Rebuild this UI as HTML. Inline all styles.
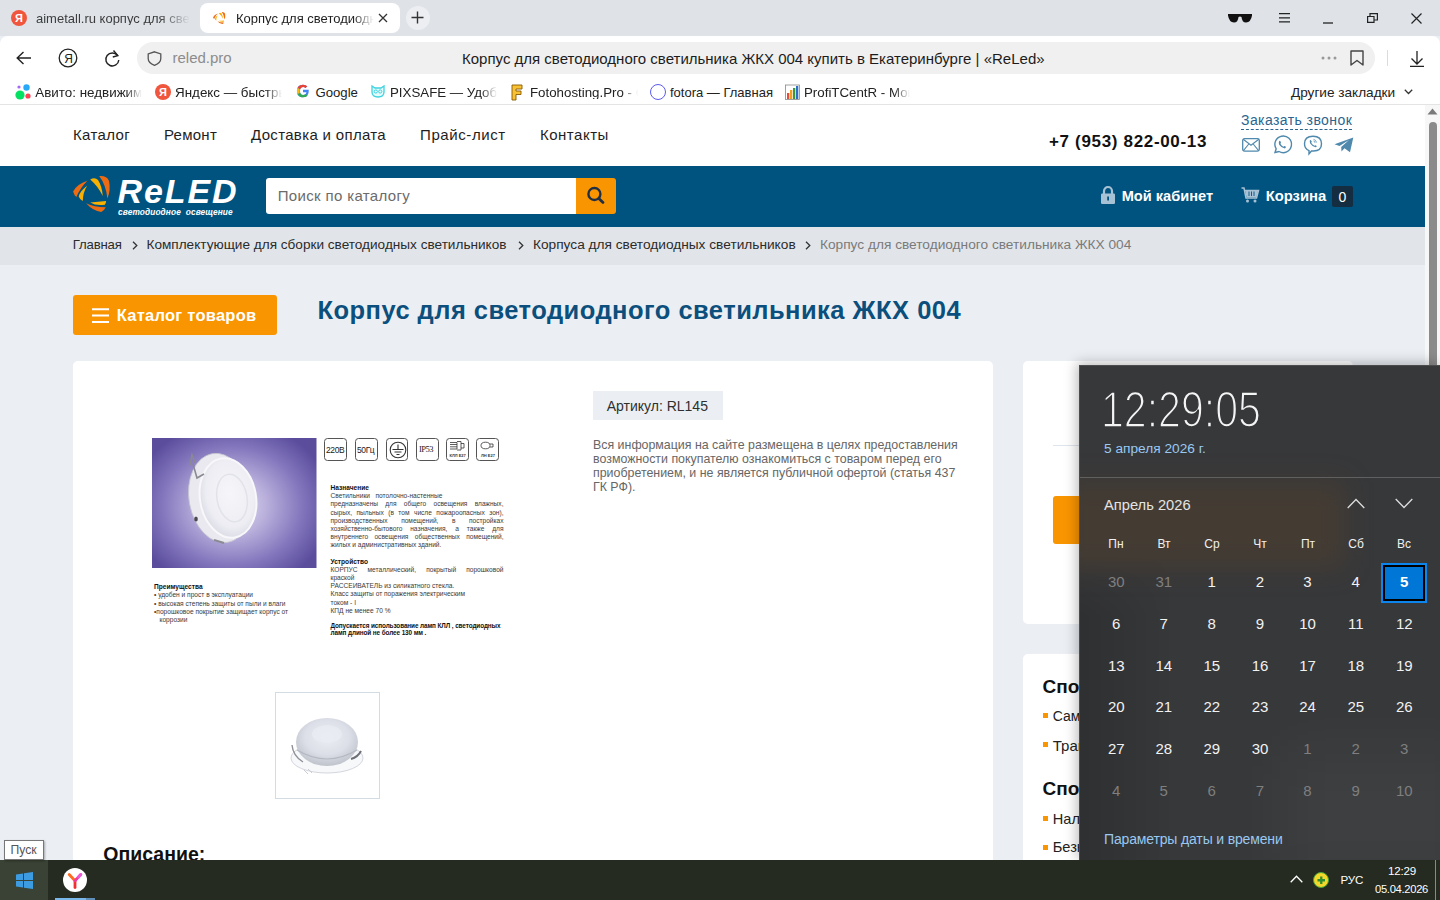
<!DOCTYPE html>
<html><head><meta charset="utf-8">
<style>
*{margin:0;padding:0;box-sizing:border-box}
html,body{width:1440px;height:900px;overflow:hidden;font-family:"Liberation Sans",sans-serif;background:#ebeff4;position:relative}
.a{position:absolute}
.t{position:absolute;white-space:nowrap;line-height:1}
svg{position:absolute;overflow:visible}
</style></head><body>

<!-- ============ BROWSER CHROME ============ -->
<div class="a" style="left:0;top:0;width:1440px;height:36px;background:#dfe3e8"></div>
<!-- tab 1 -->
<div class="a" style="left:11px;top:10px;width:16px;height:16px;border-radius:50%;background:#f0563d"></div>
<div class="t" style="left:15px;top:12.5px;font-size:11px;font-weight:bold;color:#fff">Я</div>
<div class="t" style="left:36px;top:11.8px;font-size:13px;color:#3c3c3c;width:154px;overflow:hidden;-webkit-mask-image:linear-gradient(90deg,#000 80%,transparent)">aimetall.ru корпус для свет</div>
<!-- tab 2 active -->
<div class="a" style="left:200px;top:3px;width:200px;height:30px;background:#fff;border-radius:8px"></div>
<svg style="left:212.7px;top:11.8px" width="12.4" height="12.1" viewBox="5 4 37 36">
  <path d="M19.4 8.7 Q9 12 5.1 19.4 Q6 23 8.4 25 Q12 16 19.4 8.7Z" fill="#ee6b12"/>
  <path d="M19.2 13.8 Q12 19 10.7 24.5 Q12 28 14.8 29.1 Q15 20 19.2 13.8Z" fill="#f9b000"/>
  <path d="M22.2 7.4 Q27 5 30 8 Q34 14 34.8 24 Q30 14 22.2 7.4Z" fill="#f9b000"/>
  <path d="M31.2 4.1 Q39 3.5 41 9 Q43 18 39.4 26.6 Q38 13 31.2 4.1Z" fill="#ee6b12"/>
  <path d="M22.2 30.4 Q30 30 38.1 29.1 Q38 32 36.8 32.7 Q28 34 22.2 30.4Z" fill="#f9b000"/>
  <path d="M18.1 31.2 Q26 35 37.8 35.3 Q36 39 33.2 39.9 Q25 39 18.1 31.2Z" fill="#ee6b12"/>
</svg>
<div class="t" style="left:236px;top:11.8px;font-size:13px;color:#1f1f1f;width:138px;overflow:hidden;-webkit-mask-image:linear-gradient(90deg,#000 85%,transparent)">Корпус для светодиодного</div>
<svg style="left:378px;top:13px" width="10" height="10" viewBox="0 0 10 10"><path d="M1 1L9 9M9 1L1 9" stroke="#333" stroke-width="1.3"/></svg>
<div class="a" style="left:405.5px;top:5.5px;width:24px;height:24px;border-radius:50%;background:#eceef2"></div>
<svg style="left:411px;top:11px" width="13" height="13" viewBox="0 0 13 13"><path d="M6.5 0.5V12.5M0.5 6.5H12.5" stroke="#333" stroke-width="1.4"/></svg>
<!-- window controls -->
<svg style="left:1228px;top:13px" width="24" height="10" viewBox="0 0 24 10"><path d="M0 1 H24 V2.5 Q23 9 18 9.5 Q14 9.5 13.5 4 Q12 3 10.5 4 Q10 9.5 6 9.5 Q1 9 0 2.5Z" fill="#111"/></svg>
<svg style="left:1279px;top:13px" width="11" height="10" viewBox="0 0 11 10"><path d="M0 0.7H11M0 4.8H11M0 8.9H11" stroke="#222" stroke-width="1.2"/></svg>
<svg style="left:1323px;top:22px" width="10" height="2" viewBox="0 0 10 2"><path d="M0 1H10" stroke="#222" stroke-width="1.3"/></svg>
<svg style="left:1367px;top:13px" width="11" height="10" viewBox="0 0 11 10"><path d="M0.6 3.5H7V9.4H0.6Z M3 3.5V0.6H10.4V7H7" stroke="#222" stroke-width="1.2" fill="none"/></svg>
<svg style="left:1411px;top:13px" width="11" height="11" viewBox="0 0 11 11"><path d="M0.5 0.5L10.5 10.5M10.5 0.5L0.5 10.5" stroke="#222" stroke-width="1.2"/></svg>

<!-- address row -->
<div class="a" style="left:0;top:36px;width:1440px;height:69px;background:#fff;border-radius:8px 8px 0 0;border-bottom:1px solid #e4e4e4"></div>
<svg style="left:16px;top:51px" width="16" height="14" viewBox="0 0 16 14"><path d="M15 7H1.5M7.5 1L1.2 7L7.5 13" stroke="#222" stroke-width="1.4" fill="none"/></svg>
<svg style="left:58px;top:48px" width="20" height="20" viewBox="0 0 20 20"><circle cx="10" cy="10" r="8.8" stroke="#222" stroke-width="1.3" fill="none"/><text x="6.2" y="15" font-family="Liberation Sans" font-size="12" fill="#222">Я</text></svg>
<svg style="left:104px;top:49px" width="17" height="18" viewBox="0 0 17 18"><path d="M13.5 6.5A6.5 6.5 0 1 0 14.8 11" stroke="#222" stroke-width="1.4" fill="none"/><path d="M9.5 1.5L13.8 6.6L8.8 8" stroke="#222" stroke-width="1.4" fill="none"/></svg>
<div class="a" style="left:136.5px;top:42px;width:1238px;height:32px;background:#f0f0f0;border-radius:16px"></div>
<svg style="left:147px;top:51px" width="15" height="15" viewBox="0 0 15 15"><path d="M7.5 0.8L13.8 3V7.5Q13.8 12 7.5 14.3Q1.2 12 1.2 7.5V3Z" stroke="#555" stroke-width="1.3" fill="none"/></svg>
<div class="t" style="left:172.5px;top:50px;font-size:15px;color:#8c8c8c">reled.pro</div>
<div class="t" style="left:462px;top:50.6px;font-size:15px;color:#1c1c1c">Корпус для светодиодного светильника ЖКХ 004 купить в Екатеринбурге | «ReLed»</div>
<svg style="left:1321px;top:56px" width="16" height="4" viewBox="0 0 16 4"><circle cx="2" cy="2" r="1.5" fill="#999"/><circle cx="8" cy="2" r="1.5" fill="#999"/><circle cx="14" cy="2" r="1.5" fill="#999"/></svg>
<svg style="left:1350px;top:50px" width="14" height="16" viewBox="0 0 14 16"><path d="M1 1H13V15L7 10.5L1 15Z" stroke="#444" stroke-width="1.4" fill="none" stroke-linejoin="round"/></svg>
<div class="a" style="left:1387px;top:50px;width:1px;height:16px;background:#dcdcdc"></div>
<svg style="left:1410px;top:51px" width="14" height="16" viewBox="0 0 14 16"><path d="M7 0V13M1.5 7.5L7 13L12.5 7.5M0 15.3H14" stroke="#222" stroke-width="1.3" fill="none"/></svg>

<!-- bookmarks -->
<svg style="left:15px;top:84px" width="16" height="16" viewBox="0 0 16 16"><circle cx="4" cy="3" r="1.6" fill="#a169f7"/><circle cx="11.5" cy="3.5" r="3.2" fill="#2aa8f8"/><circle cx="5" cy="11" r="4.6" fill="#04e061"/><circle cx="13" cy="12" r="2.6" fill="#ff4053"/></svg>
<div class="t" style="left:35.3px;top:85.7px;font-size:13.4px;color:#222;width:107px;overflow:hidden;-webkit-mask-image:linear-gradient(90deg,#000 85%,transparent)">Авито: недвижимость</div>
<div class="a" style="left:155px;top:84px;width:16px;height:16px;border-radius:50%;background:#f0563d"></div>
<div class="t" style="left:159px;top:86.5px;font-size:11px;font-weight:bold;color:#fff">Я</div>
<div class="t" style="left:175px;top:85.7px;font-size:13.4px;color:#222;width:107px;overflow:hidden;-webkit-mask-image:linear-gradient(90deg,#000 85%,transparent)">Яндекс — быстрый</div>
<svg style="left:296px;top:84px" width="14" height="14" viewBox="0 0 14 14"><path d="M12.8 5.8H7V8.3H10.4Q9.8 11 7 11Q4 11 4 7Q4 3 7 3Q8.5 3 9.5 4L11.3 2.2Q9.6 0.7 7 0.7Q1 0.7 0.9 7Q1 13.3 7 13.3Q13 13.3 12.8 5.8Z" fill="#4285f4"/><path d="M1.6 3.8L3.9 5.5Q4.8 3 7 3Q8.5 3 9.5 4L11.3 2.2Q9.6 0.7 7 0.7Q3.2 0.7 1.6 3.8Z" fill="#ea4335"/><path d="M1.6 10.2L3.9 8.5Q4.8 11 7 11Q8.7 11 9.6 10.1L11.7 11.8Q10 13.3 7 13.3Q3.2 13.3 1.6 10.2Z" fill="#34a853"/><path d="M1.6 3.8Q0.9 5.3 0.9 7Q0.9 8.7 1.6 10.2L3.9 8.5Q3.6 7.8 3.6 7Q3.6 6.2 3.9 5.5Z" fill="#fbbc05"/></svg>
<div class="t" style="left:315.4px;top:85.7px;font-size:13.2px;color:#222">Google</div>
<svg style="left:371px;top:85px" width="14" height="13" viewBox="0 0 14 13"><path d="M1 1L4 3H10L13 1V7Q13 12 7 12Q1 12 1 7Z" stroke="#3dd3e0" stroke-width="1.3" fill="#e6fbfc"/><circle cx="4.8" cy="6.5" r="1.6" stroke="#3dd3e0" fill="none"/><circle cx="9.2" cy="6.5" r="1.6" stroke="#3dd3e0" fill="none"/></svg>
<div class="t" style="left:390px;top:85.7px;font-size:13.3px;color:#222;width:107px;overflow:hidden;-webkit-mask-image:linear-gradient(90deg,#000 85%,transparent)">PIXSAFE — Удобный</div>
<svg style="left:511px;top:84px" width="12" height="17" viewBox="0 0 12 17"><path d="M1 1H11V5H5V7H10V10.5H5V16H1Z" fill="#f7c233" stroke="#8a5a00" stroke-width="0.9"/></svg>
<div class="t" style="left:530px;top:85.7px;font-size:13.3px;color:#222;width:108px;overflow:hidden;-webkit-mask-image:linear-gradient(90deg,#000 85%,transparent)">Fotohosting.Pro - Gallery</div>
<div class="a" style="left:650px;top:84px;width:16px;height:16px;border-radius:50%;border:1.8px solid #5c5cf0"></div>
<div class="t" style="left:670px;top:85.7px;font-size:13px;color:#222">fotora — Главная</div>
<svg style="left:785px;top:84px" width="15" height="16" viewBox="0 0 15 16"><rect x="0.5" y="1" width="14" height="14.5" fill="none" stroke="#888" stroke-width="0.8"/><rect x="2" y="9" width="2.3" height="6" fill="#e84b3c"/><rect x="5" y="6" width="2.3" height="9" fill="#f0a020"/><rect x="8" y="4" width="2.3" height="11" fill="#3a9a3a"/><rect x="11" y="2" width="2.3" height="13" fill="#2e6ec8"/></svg>
<div class="t" style="left:804px;top:85.7px;font-size:13.3px;color:#222;width:106px;overflow:hidden;-webkit-mask-image:linear-gradient(90deg,#000 85%,transparent)">ProfiTCentR - Мой сайт</div>
<div class="t" style="left:1291px;top:85.7px;font-size:13.6px;color:#222">Другие закладки</div>
<svg style="left:1404px;top:89px" width="9" height="6" viewBox="0 0 9 6"><path d="M0.8 0.8L4.5 4.5L8.2 0.8" stroke="#333" stroke-width="1.3" fill="none"/></svg>

<!-- ============ SITE ============ -->
<div class="a" style="left:0;top:105px;width:1425px;height:61px;background:#fff"></div>
<div class="t" style="left:73px;top:127.3px;font-size:15px;letter-spacing:0.35px;color:#1e1e1e">Каталог</div>
<div class="t" style="left:164px;top:127.3px;font-size:15px;letter-spacing:0.25px;color:#1e1e1e">Ремонт</div>
<div class="t" style="left:251px;top:127.3px;font-size:15px;letter-spacing:0.33px;color:#1e1e1e">Доставка и оплата</div>
<div class="t" style="left:420px;top:127.3px;font-size:15px;letter-spacing:0.6px;color:#1e1e1e">Прайс-лист</div>
<div class="t" style="left:540px;top:127.3px;font-size:15px;letter-spacing:0.5px;color:#1e1e1e">Контакты</div>
<div class="t" style="left:1049px;top:133px;font-size:17px;font-weight:bold;letter-spacing:0.67px;color:#111">+7 (953) 822-00-13</div>
<div class="t" style="left:1241px;top:113.1px;font-size:14px;letter-spacing:0.42px;color:#2a6590">Заказать звонок</div>
<div class="a" style="left:1241px;top:128.5px;width:111px;height:0;border-top:1px dashed #2a6590"></div>
<!-- contact icons -->
<svg style="left:1242px;top:138px" width="18" height="14" viewBox="0 0 18 14"><rect x="0.7" y="0.7" width="16.6" height="12.4" rx="1.8" fill="none" stroke="#4f89ad" stroke-width="1.3"/><path d="M1.2 1.2L9 7.3L16.8 1.2M1.2 12.8L6.8 6M16.8 12.8L11.2 6" stroke="#4f89ad" stroke-width="1.1" fill="none"/></svg>
<svg style="left:1272px;top:135px" width="20" height="20" viewBox="0 0 20 20"><path d="M3 17.5L4.2 13.8A8.3 8.3 0 1 1 7 16.5Z" stroke="#4f89ad" stroke-width="1.4" fill="none"/><path d="M7 6.5Q7.5 5.5 8.3 6L9 7.8Q8.6 8.6 8.4 8.8Q9.5 11 11.4 11.8L12.3 11L14 11.8Q14 13 12.7 13.4Q9.5 13.2 7.2 9.8Q6.5 8 7 6.5Z" fill="#4f89ad"/></svg>
<svg style="left:1303px;top:135px" width="20" height="20" viewBox="0 0 20 20"><path d="M10 1.2C15 1.2 18.5 3.5 18.5 8.8C18.5 14 15 16 10.5 16H8.5L6 18.8V15.6C3 14.5 1.5 12.5 1.5 8.8C1.5 3.5 5 1.2 10 1.2Z" stroke="#4f89ad" stroke-width="1.4" fill="none"/><path d="M6.8 5.5Q7.3 4.8 8 5.2L8.8 6.8Q8.5 7.5 8.2 7.8Q9.3 10 11.5 10.8L12.2 10.2L13.8 11Q13.6 12.2 12.5 12.3Q9.5 12 7.2 8.6Q6.6 7 6.8 5.5Z" fill="#4f89ad"/><path d="M10.5 4.3Q13 4.8 13.5 7.5M10.5 6Q12 6.3 12 7.8" stroke="#4f89ad" stroke-width="0.8" fill="none"/></svg>
<svg style="left:1334px;top:137px" width="20" height="16" viewBox="0 0 20 16"><path d="M0.5 7.2L19.3 0.5L16 15.2L10.5 11.3L7.5 14.5L7.2 10L15 3L5.5 9Z" fill="#4f89ad"/></svg>

<!-- blue band -->
<div class="a" style="left:0;top:166px;width:1425px;height:61px;background:#00537f"></div>
<!-- logo -->
<svg style="left:68px;top:172px" width="48" height="46" viewBox="0 0 48 46">
  <path d="M19.4 8.7 Q9 12 5.1 19.4 Q6 23 8.4 25 Q12 16 19.4 8.7Z" fill="#ee6b12"/>
  <path d="M19.2 13.8 Q12 19 10.7 24.5 Q12 28 14.8 29.1 Q15 20 19.2 13.8Z" fill="#f9b000"/>
  <path d="M22.2 7.4 Q27 5 30 8 Q34 14 34.8 24 Q30 14 22.2 7.4Z" fill="#f9b000"/>
  <path d="M31.2 4.1 Q39 3.5 41 9 Q43 18 39.4 26.6 Q38 13 31.2 4.1Z" fill="#ee6b12"/>
  <path d="M22.2 30.4 Q30 30 38.1 29.1 Q38 32 36.8 32.7 Q28 34 22.2 30.4Z" fill="#f9b000"/>
  <path d="M18.1 31.2 Q26 35 37.8 35.3 Q36 39 33.2 39.9 Q25 39 18.1 31.2Z" fill="#ee6b12"/>
</svg>
<div class="t" style="left:117.5px;top:174px;font-size:34px;font-weight:bold;font-style:italic;letter-spacing:1.9px;color:#fff">ReLED</div>
<div class="t" style="left:118px;top:208px;font-size:8.3px;font-weight:bold;font-style:italic;letter-spacing:0.12px;color:#fff">светодиодное&nbsp; освещение</div>
<!-- search -->
<div class="a" style="left:266px;top:178px;width:312px;height:35.5px;background:#fff;border-radius:3px 0 0 3px"></div>
<div class="t" style="left:277.7px;top:188.3px;font-size:15px;letter-spacing:0.35px;color:#6b6b6b">Поиск по каталогу</div>
<div class="a" style="left:576.4px;top:178px;width:39.6px;height:35.5px;background:#f99500;border-radius:0 3px 3px 0"></div>
<svg style="left:587px;top:187px" width="18" height="18" viewBox="0 0 18 18"><circle cx="7.4" cy="7" r="6" stroke="#1f2f45" stroke-width="2.4" fill="none"/><path d="M11.8 11.4L16 15.4" stroke="#1f2f45" stroke-width="2.8" stroke-linecap="round"/></svg>
<!-- cabinet / cart -->
<svg style="left:1101px;top:186px" width="14" height="18" viewBox="0 0 14 18"><path d="M3 8V5A4 4 0 0 1 11 5V8" stroke="#a8c2d5" stroke-width="2.2" fill="none"/><rect x="0" y="7.5" width="14" height="10.5" rx="1.2" fill="#a8c2d5"/><rect x="6.2" y="10.5" width="1.8" height="4" fill="#00537f"/></svg>
<div class="t" style="left:1121.7px;top:188.8px;font-size:14.6px;font-weight:bold;color:#fff">Мой кабинет</div>
<svg style="left:1241px;top:187px" width="18" height="16" viewBox="0 0 18 16"><path d="M0.5 1H3L5 11H15.5L17.5 3.5H4" stroke="#a8c2d5" stroke-width="1.5" fill="none"/><path d="M4.2 3.5H17.2L15.3 10.2H5.5Z" fill="#a8c2d5"/><path d="M8 4.5V9M10.5 4.5V9M13 4.5V9" stroke="#00537f" stroke-width="0.9"/><circle cx="6.5" cy="14" r="1.5" fill="#a8c2d5"/><circle cx="14" cy="14" r="1.5" fill="#a8c2d5"/></svg>
<div class="t" style="left:1265.7px;top:188.6px;font-size:14.8px;font-weight:bold;color:#fff">Корзина</div>
<div class="a" style="left:1332px;top:186px;width:21px;height:21px;background:#142d40;border-radius:2px"></div>
<div class="t" style="left:1338.5px;top:189.5px;font-size:14px;color:#fff">0</div>

<!-- breadcrumbs -->
<div class="a" style="left:0;top:227px;width:1425px;height:38px;background:#e1e5ea"></div>
<div class="t" style="left:72.8px;top:237.5px;font-size:13.2px;color:#2b2b2b;letter-spacing:-0.2px">Главная</div>
<svg style="left:131.5px;top:241px" width="6" height="9" viewBox="0 0 6 9"><path d="M1 0.8L4.8 4.5L1 8.2" stroke="#333" stroke-width="1.3" fill="none"/></svg>
<div class="t" style="left:146.5px;top:237.5px;font-size:13.6px;color:#2b2b2b">Комплектующие для сборки светодиодных светильников</div>
<svg style="left:517.5px;top:241px" width="6" height="9" viewBox="0 0 6 9"><path d="M1 0.8L4.8 4.5L1 8.2" stroke="#333" stroke-width="1.3" fill="none"/></svg>
<div class="t" style="left:533px;top:237.5px;font-size:13.7px;color:#2b2b2b">Корпуса для светодиодных светильников</div>
<svg style="left:805px;top:241px" width="6" height="9" viewBox="0 0 6 9"><path d="M1 0.8L4.8 4.5L1 8.2" stroke="#333" stroke-width="1.3" fill="none"/></svg>
<div class="t" style="left:820px;top:237.5px;font-size:13.7px;color:#7a7a7a">Корпус для светодиодного светильника ЖКХ 004</div>

<!-- catalog button + title -->
<div class="a" style="left:73px;top:295px;width:204px;height:40px;background:#f99500;border-radius:3px"></div>
<svg style="left:92px;top:308px" width="17" height="15" viewBox="0 0 17 15"><path d="M0 1.3H17M0 7.6H17M0 14H17" stroke="#fff" stroke-width="2"/></svg>
<div class="t" style="left:116.7px;top:307px;font-size:16.5px;font-weight:bold;letter-spacing:0.26px;color:#fff">Каталог товаров</div>
<div class="t" style="left:317.4px;top:298px;font-size:25.5px;font-weight:bold;letter-spacing:0.47px;color:#0c4f7c">Корпус для светодиодного светильника ЖКХ 004</div>

<!-- main card -->
<div class="a" style="left:73px;top:361px;width:920px;height:540px;background:#fff;border-radius:5px"></div>
<!-- sidebar cards -->
<div class="a" style="left:1023px;top:361px;width:330px;height:263px;background:#fff;border-radius:5px"></div>
<div class="a" style="left:1053px;top:444.5px;width:270px;height:1px;background:#dfe5ec"></div>
<div class="a" style="left:1053px;top:496px;width:270px;height:47.5px;background:#f99500;border-radius:3px"></div>
<div class="a" style="left:1023px;top:654px;width:330px;height:260px;background:#fff;border-radius:5px"></div>
<div class="t" style="left:1042.5px;top:676.5px;font-size:19px;font-weight:bold;color:#111">Способы получения</div>
<div class="a" style="left:1043px;top:713px;width:5px;height:5px;background:#f99500"></div>
<div class="t" style="left:1052.8px;top:708.8px;font-size:14px;color:#222">Самовывоз</div>
<div class="a" style="left:1043px;top:742px;width:5px;height:5px;background:#f99500"></div>
<div class="t" style="left:1052.8px;top:737.7px;font-size:15px;color:#222">Транспортная компания</div>
<div class="t" style="left:1042.5px;top:779.2px;font-size:19px;font-weight:bold;color:#111">Способы оплаты</div>
<div class="a" style="left:1043px;top:816px;width:5px;height:5px;background:#f99500"></div>
<div class="t" style="left:1052.8px;top:811.6px;font-size:14.6px;color:#222">Наличными</div>
<div class="a" style="left:1043px;top:844.5px;width:5px;height:5px;background:#f99500"></div>
<div class="t" style="left:1052.8px;top:839.7px;font-size:14.6px;color:#222">Безналичный расчет</div>

<!-- product image -->
<svg style="left:151.5px;top:437.5px" width="164.5" height="130" viewBox="0 0 164.5 130">
  <defs>
    <radialGradient id="pbg" cx="80" cy="68" r="100" gradientUnits="userSpaceOnUse" gradientTransform="translate(80 68) scale(1 0.85) translate(-80 -68)">
      <stop offset="0" stop-color="#e4e0f2"/><stop offset="0.35" stop-color="#b9afdb"/><stop offset="0.7" stop-color="#8376bd"/><stop offset="1" stop-color="#5b4d9c"/>
    </radialGradient>
    <radialGradient id="glass" cx="0.55" cy="0.45" r="0.6">
      <stop offset="0" stop-color="#f6f6fa"/><stop offset="0.7" stop-color="#ededf3"/><stop offset="1" stop-color="#d9d9e4"/>
    </radialGradient>
  </defs>
  <rect width="164.5" height="130" fill="url(#pbg)"/>
  <ellipse cx="68" cy="60" rx="31" ry="45" transform="rotate(-10 68 60)" fill="#e9e9ef" stroke="#c4c4d0" stroke-width="0.8"/>
  <ellipse cx="76" cy="60" rx="28" ry="40" transform="rotate(-10 76 60)" fill="url(#glass)" stroke="#f8f8fb" stroke-width="2"/>
  <ellipse cx="80" cy="60" rx="15" ry="24" transform="rotate(-10 80 60)" fill="none" stroke="#e2e2ea" stroke-width="1.5"/>
  <path d="M38 27 L40 17 L43 25 M41 26 L45 40 L52 36" stroke="#8a8a92" stroke-width="1.6" fill="none"/>
  <path d="M62 102 L72 105" stroke="#8a8a92" stroke-width="2.2"/>
  <ellipse cx="44" cy="81" rx="1.8" ry="2.6" fill="#4a4a50"/>
</svg>
<!-- spec icons -->
<div class="a" style="left:324.4px;top:438.3px;width:22.3px;height:23px;border:1.2px solid #555;border-radius:3.5px"></div>
<div class="t" style="left:326px;top:446px;font-size:8.5px;color:#222;letter-spacing:-0.4px">220В</div>
<div class="a" style="left:355.3px;top:438.3px;width:22.3px;height:23px;border:1.2px solid #555;border-radius:3.5px"></div>
<div class="t" style="left:357px;top:446px;font-size:8.5px;color:#222;letter-spacing:-0.4px">50Гц</div>
<div class="a" style="left:386px;top:438.3px;width:22.3px;height:23px;border:1.2px solid #555;border-radius:3.5px"></div>
<svg style="left:388.5px;top:441px" width="18" height="18" viewBox="0 0 18 18"><circle cx="9" cy="9" r="7.8" stroke="#333" stroke-width="1.1" fill="none"/><path d="M9 3.5V8.5M3.5 8.5H14.5M5.5 11H12.5M7.5 13.5H10.5" stroke="#333" stroke-width="1.1"/></svg>
<div class="a" style="left:416.4px;top:438.3px;width:22.3px;height:23px;border:1.2px solid #555;border-radius:3.5px"></div>
<div class="t" style="left:419px;top:444.5px;font-size:8.5px;color:#222;letter-spacing:-0.5px;font-family:'Liberation Serif'">IP53</div>
<div class="a" style="left:446.3px;top:438.3px;width:22.3px;height:23px;border:1.2px solid #555;border-radius:3.5px"></div>
<svg style="left:448px;top:440px" width="19" height="19" viewBox="0 0 19 19"><path d="M2 2.5H9V9H2M2 4.5H9M2 6.8H9M9 1.5H13V10H9M13 3.5H16V8H13" stroke="#333" stroke-width="0.8" fill="none"/><text x="1.5" y="17" font-size="4" font-family="Liberation Sans" font-weight="bold" fill="#333">КЛЛ E27</text></svg>
<div class="a" style="left:476px;top:438.3px;width:23px;height:23px;border:1.2px solid #555;border-radius:3.5px"></div>
<svg style="left:478px;top:440px" width="19" height="19" viewBox="0 0 19 19"><ellipse cx="7.5" cy="5.5" rx="4.5" ry="3.3" stroke="#333" stroke-width="0.8" fill="none"/><path d="M12 4H15V7H12" stroke="#333" stroke-width="0.8" fill="none"/><text x="3" y="17" font-size="4" font-family="Liberation Sans" font-weight="bold" fill="#333">ЛН E27</text></svg>

<!-- spec text -->
<div class="a" style="left:330.5px;top:484px;width:173px;font-size:6.6px;line-height:8.2px;color:#3a3a3a;text-align:justify">
<b style="color:#111">Назначение</b><br>
Светильники&nbsp;&nbsp; потолочно-настенные<br>
предназначены для общего освещения влажных, сырых, пыльных (в том числе пожароопасных зон), производственных помещений, в постройках хозяйственно-бытового назначения, а также для внутреннего освещения общественных помещений, жилых и административных зданий.
</div>
<div class="a" style="left:330.5px;top:557.5px;width:173px;font-size:6.6px;line-height:8.2px;color:#3a3a3a;text-align:justify">
<b style="color:#111">Устройство</b><br>
КОРПУС металлический, покрытый порошковой краской<br>
РАССЕИВАТЕЛЬ из силикатного стекла.<br>
Класс защиты от поражения электрическим<br>током - I<br>
КПД не менее 70 %
</div>
<div class="a" style="left:330.5px;top:621.5px;width:173px;font-size:6.4px;line-height:7.2px;color:#111;font-weight:bold;white-space:nowrap;letter-spacing:-0.1px">
Допускается использование ламп КЛЛ , светодиодных<br>ламп длиной не более 130 мм .
</div>
<div class="a" style="left:154px;top:583px;width:165px;font-size:6.6px;line-height:8.3px;color:#3a3a3a">
<b style="color:#111">Преимущества</b><br>
• удобен и прост в эксплуатации<br>
• высокая степень защиты от пыли и влаги<br>
•порошковое покрытие защищает корпус от<br>&nbsp;&nbsp;&nbsp;коррозии
</div>

<!-- thumbnail -->
<div class="a" style="left:275.2px;top:692.3px;width:104.5px;height:106.5px;border:1px solid #d3dbe3"></div>
<svg style="left:275px;top:692px" width="105" height="107" viewBox="0 0 105 107">
  <defs><radialGradient id="dome" cx="0.5" cy="0.4" r="0.6"><stop offset="0" stop-color="#eceef4"/><stop offset="0.6" stop-color="#dcdfe7"/><stop offset="1" stop-color="#bfc3cc"/></radialGradient></defs>
  <ellipse cx="52" cy="66" rx="36" ry="15" fill="#f7f8fa" stroke="#d3d6dd" stroke-width="1"/>
  <ellipse cx="52" cy="50" rx="31" ry="24" fill="url(#dome)"/>
  <ellipse cx="52" cy="42" rx="15" ry="9" fill="#e9ecf2" opacity="0.8"/>
  <path d="M22 58 Q52 76 82 58" stroke="#b4b8c1" stroke-width="1.2" fill="none"/>
  <path d="M17 53 Q18 64 28 70" stroke="#8d9098" stroke-width="1.4" fill="none"/>
  <path d="M76 67 Q83 65 86 59" stroke="#6d7078" stroke-width="2" fill="none"/>
  <path d="M29 78 L33 82 M33 77 L37 81" stroke="#c9ccd2" stroke-width="1"/>
</svg>

<!-- article + disclaimer -->
<div class="a" style="left:593px;top:391px;width:130px;height:29px;background:#ebeff4"></div>
<div class="t" style="left:606.7px;top:398.8px;font-size:14px;color:#2f2f2f">Артикул: RL145</div>
<div class="a" style="left:593px;top:437.5px;width:380px;font-size:12.4px;line-height:14px;color:#666">Вся информация на сайте размещена в целях предоставления<br>возможности покупателю ознакомиться с товаром перед его<br>приобретением, и не является публичной офертой (статья 437<br>ГК РФ).</div>

<div class="t" style="left:103.3px;top:845.2px;font-size:19.5px;font-weight:bold;color:#111">Описание:</div>

<!-- scrollbar -->
<div class="a" style="left:1425px;top:105px;width:15px;height:755px;background:#f7f7f7"></div>
<svg style="left:1427px;top:108px" width="11" height="7" viewBox="0 0 11 7"><path d="M0.5 6.5L5.5 0.5L10.5 6.5Z" fill="#7a7a7a"/></svg>
<div class="a" style="left:1428.5px;top:122px;width:8px;height:300px;background:#8b8b8b;border-radius:4px"></div>

<!-- ============ CALENDAR FLYOUT ============ -->
<div class="a" style="left:1079px;top:365px;width:361px;height:495px;background:#37383a;border:1px solid #4c4c4c;border-right:0;border-bottom:0;box-shadow:-2px -2px 12px rgba(0,0,0,0.28);overflow:hidden">
  <div class="a" style="left:0;top:190px;width:360px;height:304px;background:linear-gradient(90deg,rgba(0,0,0,0.14),rgba(0,0,0,0) 90px);-webkit-mask-image:linear-gradient(180deg,transparent,#000 60px)"></div>
  <div class="a" style="left:200px;top:380px;width:200px;height:140px;background:rgba(255,255,255,0.035);filter:blur(30px)"></div>
  <div class="a" style="left:-20px;top:116px;width:285px;height:86px;background:rgba(92,66,40,0.36);filter:blur(13px)"></div>
  <div class="a" style="left:0;top:111px;width:360px;height:1px;background:#606060"></div>
</div>
<div class="t" style="left:1100.5px;top:385px;font-size:49.5px;color:#f4f4f4;-webkit-text-stroke:1.7px #37383a;transform:scaleX(0.83);transform-origin:0 0">12:29:05</div>
<div class="t" style="left:1104px;top:441.7px;font-size:13.7px;color:#99c9f3">5 апреля 2026 г.</div>
<div class="t" style="left:1104px;top:497.6px;font-size:14.7px;color:#e4e4e4">Апрель 2026</div>
<svg style="left:1347px;top:498px" width="18" height="11" viewBox="0 0 18 11"><path d="M0.7 10L9 1.5L17.3 10" stroke="#ddd" stroke-width="1.3" fill="none"/></svg>
<svg style="left:1395px;top:498px" width="18" height="11" viewBox="0 0 18 11"><path d="M0.7 1L9 9.5L17.3 1" stroke="#ddd" stroke-width="1.3" fill="none"/></svg>
<!-- weekdays -->
<div class="t" style="left:1096px;top:537.8px;width:40px;text-align:center;font-size:12px;color:#f0f0f0">Пн</div>
<div class="t" style="left:1144px;top:537.8px;width:40px;text-align:center;font-size:12px;color:#f0f0f0">Вт</div>
<div class="t" style="left:1192px;top:537.8px;width:40px;text-align:center;font-size:12px;color:#f0f0f0">Ср</div>
<div class="t" style="left:1240px;top:537.8px;width:40px;text-align:center;font-size:12px;color:#f0f0f0">Чт</div>
<div class="t" style="left:1288px;top:537.8px;width:40px;text-align:center;font-size:12px;color:#f0f0f0">Пт</div>
<div class="t" style="left:1336px;top:537.8px;width:40px;text-align:center;font-size:12px;color:#f0f0f0">Сб</div>
<div class="t" style="left:1384px;top:537.8px;width:40px;text-align:center;font-size:12px;color:#f0f0f0">Вс</div>
<!-- selected day -->
<div class="a" style="left:1381px;top:563px;width:46px;height:40px;border:2px solid #0c86ee;background:#000"></div>
<div class="a" style="left:1385px;top:567px;width:38px;height:32px;background:#0077d6"></div>
<!-- day grid generated below as static markup -->
<div class="t" style="left:1096.25px;top:574.3px;width:40px;text-align:center;font-size:15px;color:#7f7f7f">30</div>
<div class="t" style="left:1143.75px;top:574.3px;width:40px;text-align:center;font-size:15px;color:#7f7f7f">31</div>
<div class="t" style="left:1191.75px;top:574.3px;width:40px;text-align:center;font-size:15px;color:#f2f2f2">1</div>
<div class="t" style="left:1240.00px;top:574.3px;width:40px;text-align:center;font-size:15px;color:#f2f2f2">2</div>
<div class="t" style="left:1287.50px;top:574.3px;width:40px;text-align:center;font-size:15px;color:#f2f2f2">3</div>
<div class="t" style="left:1335.75px;top:574.3px;width:40px;text-align:center;font-size:15px;color:#f2f2f2">4</div>
<div class="t" style="left:1384.25px;top:574.3px;width:40px;text-align:center;font-size:15px;font-weight:bold;color:#fff">5</div>
<div class="t" style="left:1096.25px;top:616.0px;width:40px;text-align:center;font-size:15px;color:#f2f2f2">6</div>
<div class="t" style="left:1143.75px;top:616.0px;width:40px;text-align:center;font-size:15px;color:#f2f2f2">7</div>
<div class="t" style="left:1191.75px;top:616.0px;width:40px;text-align:center;font-size:15px;color:#f2f2f2">8</div>
<div class="t" style="left:1240.00px;top:616.0px;width:40px;text-align:center;font-size:15px;color:#f2f2f2">9</div>
<div class="t" style="left:1287.50px;top:616.0px;width:40px;text-align:center;font-size:15px;color:#f2f2f2">10</div>
<div class="t" style="left:1335.75px;top:616.0px;width:40px;text-align:center;font-size:15px;color:#f2f2f2">11</div>
<div class="t" style="left:1384.25px;top:616.0px;width:40px;text-align:center;font-size:15px;color:#f2f2f2">12</div>
<div class="t" style="left:1096.25px;top:657.6px;width:40px;text-align:center;font-size:15px;color:#f2f2f2">13</div>
<div class="t" style="left:1143.75px;top:657.6px;width:40px;text-align:center;font-size:15px;color:#f2f2f2">14</div>
<div class="t" style="left:1191.75px;top:657.6px;width:40px;text-align:center;font-size:15px;color:#f2f2f2">15</div>
<div class="t" style="left:1240.00px;top:657.6px;width:40px;text-align:center;font-size:15px;color:#f2f2f2">16</div>
<div class="t" style="left:1287.50px;top:657.6px;width:40px;text-align:center;font-size:15px;color:#f2f2f2">17</div>
<div class="t" style="left:1335.75px;top:657.6px;width:40px;text-align:center;font-size:15px;color:#f2f2f2">18</div>
<div class="t" style="left:1384.25px;top:657.6px;width:40px;text-align:center;font-size:15px;color:#f2f2f2">19</div>
<div class="t" style="left:1096.25px;top:699.3px;width:40px;text-align:center;font-size:15px;color:#f2f2f2">20</div>
<div class="t" style="left:1143.75px;top:699.3px;width:40px;text-align:center;font-size:15px;color:#f2f2f2">21</div>
<div class="t" style="left:1191.75px;top:699.3px;width:40px;text-align:center;font-size:15px;color:#f2f2f2">22</div>
<div class="t" style="left:1240.00px;top:699.3px;width:40px;text-align:center;font-size:15px;color:#f2f2f2">23</div>
<div class="t" style="left:1287.50px;top:699.3px;width:40px;text-align:center;font-size:15px;color:#f2f2f2">24</div>
<div class="t" style="left:1335.75px;top:699.3px;width:40px;text-align:center;font-size:15px;color:#f2f2f2">25</div>
<div class="t" style="left:1384.25px;top:699.3px;width:40px;text-align:center;font-size:15px;color:#f2f2f2">26</div>
<div class="t" style="left:1096.25px;top:741.0px;width:40px;text-align:center;font-size:15px;color:#f2f2f2">27</div>
<div class="t" style="left:1143.75px;top:741.0px;width:40px;text-align:center;font-size:15px;color:#f2f2f2">28</div>
<div class="t" style="left:1191.75px;top:741.0px;width:40px;text-align:center;font-size:15px;color:#f2f2f2">29</div>
<div class="t" style="left:1240.00px;top:741.0px;width:40px;text-align:center;font-size:15px;color:#f2f2f2">30</div>
<div class="t" style="left:1287.50px;top:741.0px;width:40px;text-align:center;font-size:15px;color:#7f7f7f">1</div>
<div class="t" style="left:1335.75px;top:741.0px;width:40px;text-align:center;font-size:15px;color:#7f7f7f">2</div>
<div class="t" style="left:1384.25px;top:741.0px;width:40px;text-align:center;font-size:15px;color:#7f7f7f">3</div>
<div class="t" style="left:1096.25px;top:782.7px;width:40px;text-align:center;font-size:15px;color:#7f7f7f">4</div>
<div class="t" style="left:1143.75px;top:782.7px;width:40px;text-align:center;font-size:15px;color:#7f7f7f">5</div>
<div class="t" style="left:1191.75px;top:782.7px;width:40px;text-align:center;font-size:15px;color:#7f7f7f">6</div>
<div class="t" style="left:1240.00px;top:782.7px;width:40px;text-align:center;font-size:15px;color:#7f7f7f">7</div>
<div class="t" style="left:1287.50px;top:782.7px;width:40px;text-align:center;font-size:15px;color:#7f7f7f">8</div>
<div class="t" style="left:1335.75px;top:782.7px;width:40px;text-align:center;font-size:15px;color:#7f7f7f">9</div>
<div class="t" style="left:1384.25px;top:782.7px;width:40px;text-align:center;font-size:15px;color:#7f7f7f">10</div>
<div class="t" style="left:1104px;top:832px;font-size:14px;letter-spacing:-0.15px;color:#99c8f0">Параметры даты и времени</div>

<!-- ============ TASKBAR ============ -->
<div class="a" style="left:0;top:860px;width:1440px;height:40px;background:#252b20"></div>
<div class="a" style="left:0;top:860px;width:48px;height:40px;background:#394234"></div>
<svg style="left:16px;top:872px" width="17" height="17" viewBox="0 0 17 17"><path d="M0 2.4L7 1.4V8H0Z M8 1.25L17 0V8H8Z M0 9H7V15.6L0 14.6Z M8 9H17V17L8 15.75Z" fill="#3d9be2"/></svg>
<div class="a" style="left:63px;top:868px;width:24px;height:24px;border-radius:50%;background:#fff"></div>
<svg style="left:66px;top:871px" width="18" height="18" viewBox="0 0 18 18"><path d="M9 9.5V16.5" stroke="#f42e2e" stroke-width="2.8" stroke-linecap="round"/><path d="M3.2 3.5L9 9.8" stroke="#ff6a1f" stroke-width="2.8" stroke-linecap="round"/><path d="M14.8 3.5L9 9.8" stroke="#f0389a" stroke-width="2.8" stroke-linecap="round"/><path d="M14.8 3.5L12.5 6" stroke="#e85ad8" stroke-width="2.8" stroke-linecap="round"/></svg>
<div class="a" style="left:55px;top:898px;width:40px;height:2px;background:#79b6ea"></div>
<div class="a" style="left:86px;top:898px;width:9px;height:2px;background:#5f8fb8"></div>
<!-- tooltip -->
<div class="a" style="left:4px;top:840px;width:40px;height:19.5px;background:#fff;border:1px solid #777;box-shadow:1px 1px 2px rgba(0,0,0,0.3)"></div>
<div class="t" style="left:10.5px;top:844.3px;font-size:12.2px;color:#555">Пуск</div>
<!-- tray -->
<svg style="left:1290px;top:875px" width="13" height="8" viewBox="0 0 13 8"><path d="M0.7 7.3L6.5 1.2L12.3 7.3" stroke="#fff" stroke-width="1.3" fill="none"/></svg>
<div class="a" style="left:1312.5px;top:871.8px;width:16.5px;height:16.5px;border-radius:50%;background:#f2d82b;border:1.6px solid #45a33a"></div>
<svg style="left:1314.5px;top:873.8px" width="12.5" height="12.5" viewBox="0 0 12.5 12.5"><path d="M6.25 2.5V10M2.5 6.25H10" stroke="#2f8d2f" stroke-width="2.3"/></svg>
<div class="t" style="left:1340.5px;top:873.8px;font-size:11.6px;letter-spacing:-0.2px;color:#fff">РУС</div>
<div class="t" style="left:1388px;top:865px;font-size:11.6px;letter-spacing:-0.2px;color:#fff">12:29</div>
<div class="t" style="left:1375px;top:883.6px;font-size:11.2px;letter-spacing:-0.3px;color:#fff">05.04.2026</div>
<div class="a" style="left:1435px;top:860px;width:1px;height:40px;background:#888"></div>

</body></html>
